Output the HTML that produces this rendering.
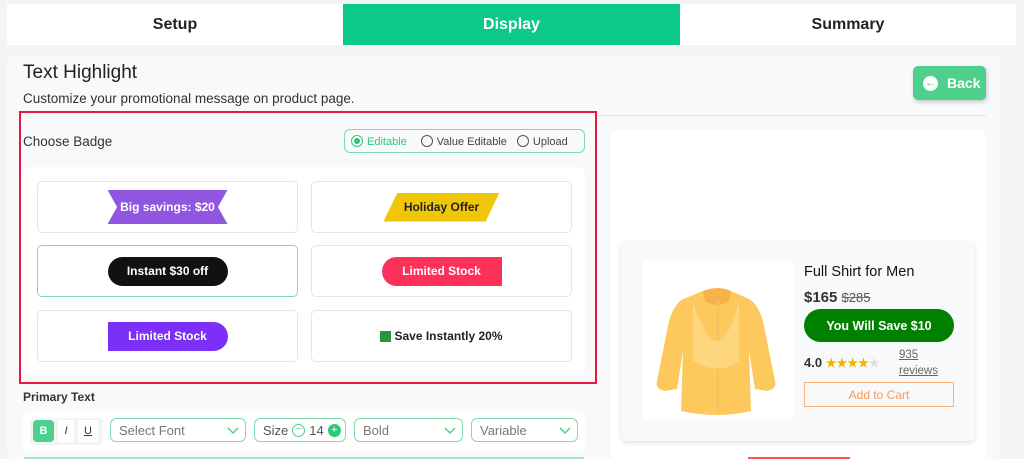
<!DOCTYPE html>
<html><head><meta charset="utf-8"><style>
*{box-sizing:border-box;margin:0;padding:0}
body{width:1024px;height:459px;overflow:hidden;background:#f3f4f5;font-family:"Liberation Sans",sans-serif;position:relative;color:#333}
.a{position:absolute}
.tab{top:4px;height:41px;display:flex;align-items:center;justify-content:center;font-size:16px;font-weight:bold;color:#222}
.card{position:absolute;background:#fff;border:1px solid #e3e5e8;border-radius:5px;width:261px;height:52px;display:flex;align-items:center;justify-content:center}
.sel{position:absolute;top:418px;height:24px;border:1.5px solid #7fd9a8;border-radius:6px;background:#fff;font-size:13px;color:#777;display:flex;align-items:center;padding-left:8px}
.chev{position:absolute;right:6px;top:5px}
.rad{display:inline-block;width:12px;height:12px;border:1.5px solid #555;border-radius:50%;vertical-align:-2px;margin-right:4px}
</style></head><body>
<div class="a tab" style="left:7px;width:336px;background:#fff">Setup</div>
<div class="a tab" style="left:343px;width:337px;background:#0cc987;color:#fff">Display</div>
<div class="a tab" style="left:680px;width:336px;background:#fff">Summary</div>
<div class="a" style="left:7px;top:55px;width:993px;height:404px;background:#f8f9fa;border-radius:6px"></div>
<div class="a" style="left:23px;top:62px;font-size:19px;color:#222">Text Highlight</div>
<div class="a" style="left:23px;top:91px;font-size:13.5px;color:#333">Customize your promotional message on product page.</div>
<div class="a" style="left:913px;top:66px;width:73px;height:34px;background:#4fcf8c;border-radius:5px;box-shadow:1px 2px 4px rgba(0,0,0,.2);color:#fff;font-size:14px;font-weight:bold;display:flex;align-items:center;padding-left:10px"><span style="display:inline-block;width:15px;height:15px;border-radius:50%;background:#fff;color:#4fcf8c;font-size:11px;line-height:15px;text-align:center;margin-right:9px">←</span>Back</div>
<div class="a" style="left:596px;top:115px;width:390px;height:1px;background:#e2e4e6"></div>
<div class="a" style="left:19px;top:111px;width:578px;height:273px;border:2px solid #e8173f"></div>
<div class="a" style="left:23px;top:134px;font-size:13.5px;color:#333">Choose Badge</div>
<div class="a" style="left:344px;top:129px;width:241px;height:24px;border:1.5px solid #7fd9a8;border-radius:6px;font-size:11px;color:#444;display:flex;align-items:center;padding-left:6px;white-space:nowrap">
<span style="color:#2fc77a"><span class="rad" style="border-color:#2fc77a;background:radial-gradient(#2fc77a 40%,#fff 45%)"></span>Editable</span>
<span style="margin-left:14px"><span class="rad"></span>Value Editable</span>
<span style="margin-left:10px"><span class="rad"></span>Upload</span></div>
<div class="a" style="left:23px;top:167px;width:562px;height:208px;background:#fff;border-radius:6px"></div>
<div class="card" style="left:37px;top:181px"><div style="background:#9056e0;color:#fff;font-size:12px;font-weight:bold;width:120px;height:34px;display:flex;align-items:center;justify-content:center;clip-path:polygon(0 0,100% 0,92% 50%,100% 100%,0 100%,8% 50%)">Big savings: $20</div></div>
<div class="card" style="left:311px;top:181px"><div style="background:#f0c609;color:#222;font-size:12px;font-weight:bold;width:116px;height:29px;display:flex;align-items:center;justify-content:center;clip-path:polygon(12% 0,100% 0,88% 100%,0 100%)">Holiday Offer</div></div>
<div class="card" style="left:37px;top:245px;border-color:#7fd9a8"><div style="background:#111;color:#fff;font-size:12px;font-weight:bold;width:120px;height:29px;border-radius:15px;display:flex;align-items:center;justify-content:center">Instant $30 off</div></div>
<div class="card" style="left:311px;top:245px"><div style="background:#fd3157;color:#fff;font-size:12px;font-weight:bold;width:120px;height:29px;border-radius:15px 0 0 15px;display:flex;align-items:center;justify-content:center">Limited Stock</div></div>
<div class="card" style="left:37px;top:310px"><div style="background:#7b2ff7;color:#fff;font-size:12px;font-weight:bold;width:120px;height:29px;border-radius:0 15px 15px 0;display:flex;align-items:center;justify-content:center">Limited Stock</div></div>
<div class="card" style="left:311px;top:310px"><div style="font-size:12px;font-weight:bold;color:#222;display:flex;align-items:center"><span style="width:11px;height:11px;background:#27963f;margin-right:3px"></span>Save Instantly 20%</div></div>
<div class="a" style="left:23px;top:390px;font-size:12px;font-weight:bold;color:#333">Primary Text</div>
<div class="a" style="left:23px;top:411px;width:562px;height:40px;background:#fff;border-radius:6px"></div>
<div class="a" style="left:30px;top:418px;width:73px;height:27px;background:#f3f4f5;border-radius:4px"></div>
<div class="a" style="left:33px;top:420px;width:21px;height:22px;background:#4fcf8c;border-radius:4px;color:#fff;font-size:11px;font-weight:bold;text-align:center;line-height:22px">B</div>
<div class="a" style="left:58px;top:420px;width:16px;height:22px;background:#fff;font-size:11px;font-style:italic;text-align:center;line-height:22px">I</div>
<div class="a" style="left:78px;top:420px;width:20px;height:22px;background:#fff;font-size:11px;text-decoration:underline;text-align:center;line-height:22px">U</div>
<div class="sel" style="left:110px;width:136px">Select Font<svg class="chev" width="12" height="12" viewBox="0 0 12 12"><path d="M1 4l5 5 5-5" stroke="#4fcf8c" fill="none" stroke-width="1.5"/></svg></div>
<div class="sel" style="left:254px;width:92px;color:#555">Size <span style="display:inline-block;width:13px;height:13px;border:1.2px solid #4fcf8c;border-radius:50%;margin:0 4px;font-size:10px;line-height:10px;text-align:center;color:#4fcf8c">−</span>14<span style="display:inline-block;width:13px;height:13px;background:#2fc77a;border-radius:50%;margin-left:4px;font-size:11px;line-height:13px;text-align:center;color:#fff">+</span></div>
<div class="sel" style="left:354px;width:109px">Bold<svg class="chev" width="12" height="12" viewBox="0 0 12 12"><path d="M1 4l5 5 5-5" stroke="#4fcf8c" fill="none" stroke-width="1.5"/></svg></div>
<div class="sel" style="left:471px;width:107px">Variable<svg class="chev" width="12" height="12" viewBox="0 0 12 12"><path d="M1 4l5 5 5-5" stroke="#4fcf8c" fill="none" stroke-width="1.5"/></svg></div>
<div class="a" style="left:24px;top:457px;width:560px;height:2px;background:#a9e6c6"></div>
<div class="a" style="left:611px;top:130px;width:375px;height:329px;background:#fff;border-radius:6px"></div>
<div class="a" style="left:621px;top:241px;width:354px;height:200px;background:#f8f9fa;border-radius:6px;box-shadow:0 2px 4px rgba(0,0,0,.12)"></div>
<div class="a" style="left:643px;top:261px;width:151px;height:159px;background:#fff;border-radius:4px">
<svg width="151" height="159" viewBox="0 0 151 159"><path d="M60 30 L40 38 Q28 45 24 70 L14 120 Q12 128 22 130 L34 128 L40 90 L38 150 Q75 158 108 150 L106 90 L112 128 L124 130 Q134 128 132 120 L122 70 Q118 45 106 38 L88 30 Z" fill="#fdc95c"/><path d="M60 30 Q75 24 88 30 L86 40 Q75 48 62 40Z" fill="#f7b24a"/><path d="M75 40 L75 150" stroke="#f6c060" stroke-width="2"/><path d="M50 40 Q75 120 96 40 L96 100 Q75 115 50 100Z" fill="#fedb8c" opacity=".7"/></svg></div>
<div class="a" style="left:804px;top:264px;font-size:14.5px;color:#111">Full Shirt for Men</div>
<div class="a" style="left:804px;top:289px;font-size:15px;font-weight:bold;color:#333">$165 <span style="font-size:13px;font-weight:normal;color:#555;text-decoration:line-through;text-decoration-color:#e33">$285</span></div>
<div class="a" style="left:804px;top:309px;width:150px;height:33px;background:#008000;border-radius:17px;color:#fff;font-size:12.5px;font-weight:bold;display:flex;align-items:center;justify-content:center">You Will Save $10</div>
<div class="a" style="left:804px;top:355px;font-size:13px;font-weight:bold;color:#333">4.0 <span style="color:#f0b400;font-size:12px">★★★★</span><span style="color:#ddd;font-size:12px">★</span></div>
<div class="a" style="left:899px;top:347px;font-size:11.5px;color:#666;text-decoration:underline;line-height:16px">935<br>reviews</div>
<div class="a" style="left:804px;top:382px;width:150px;height:25px;border:1.5px solid #fbb17a;color:#f79a55;font-size:12px;display:flex;align-items:center;justify-content:center">Add to Cart</div>
<div class="a" style="left:748px;top:457px;width:102px;height:2px;background:#f55"></div>
</body></html>
